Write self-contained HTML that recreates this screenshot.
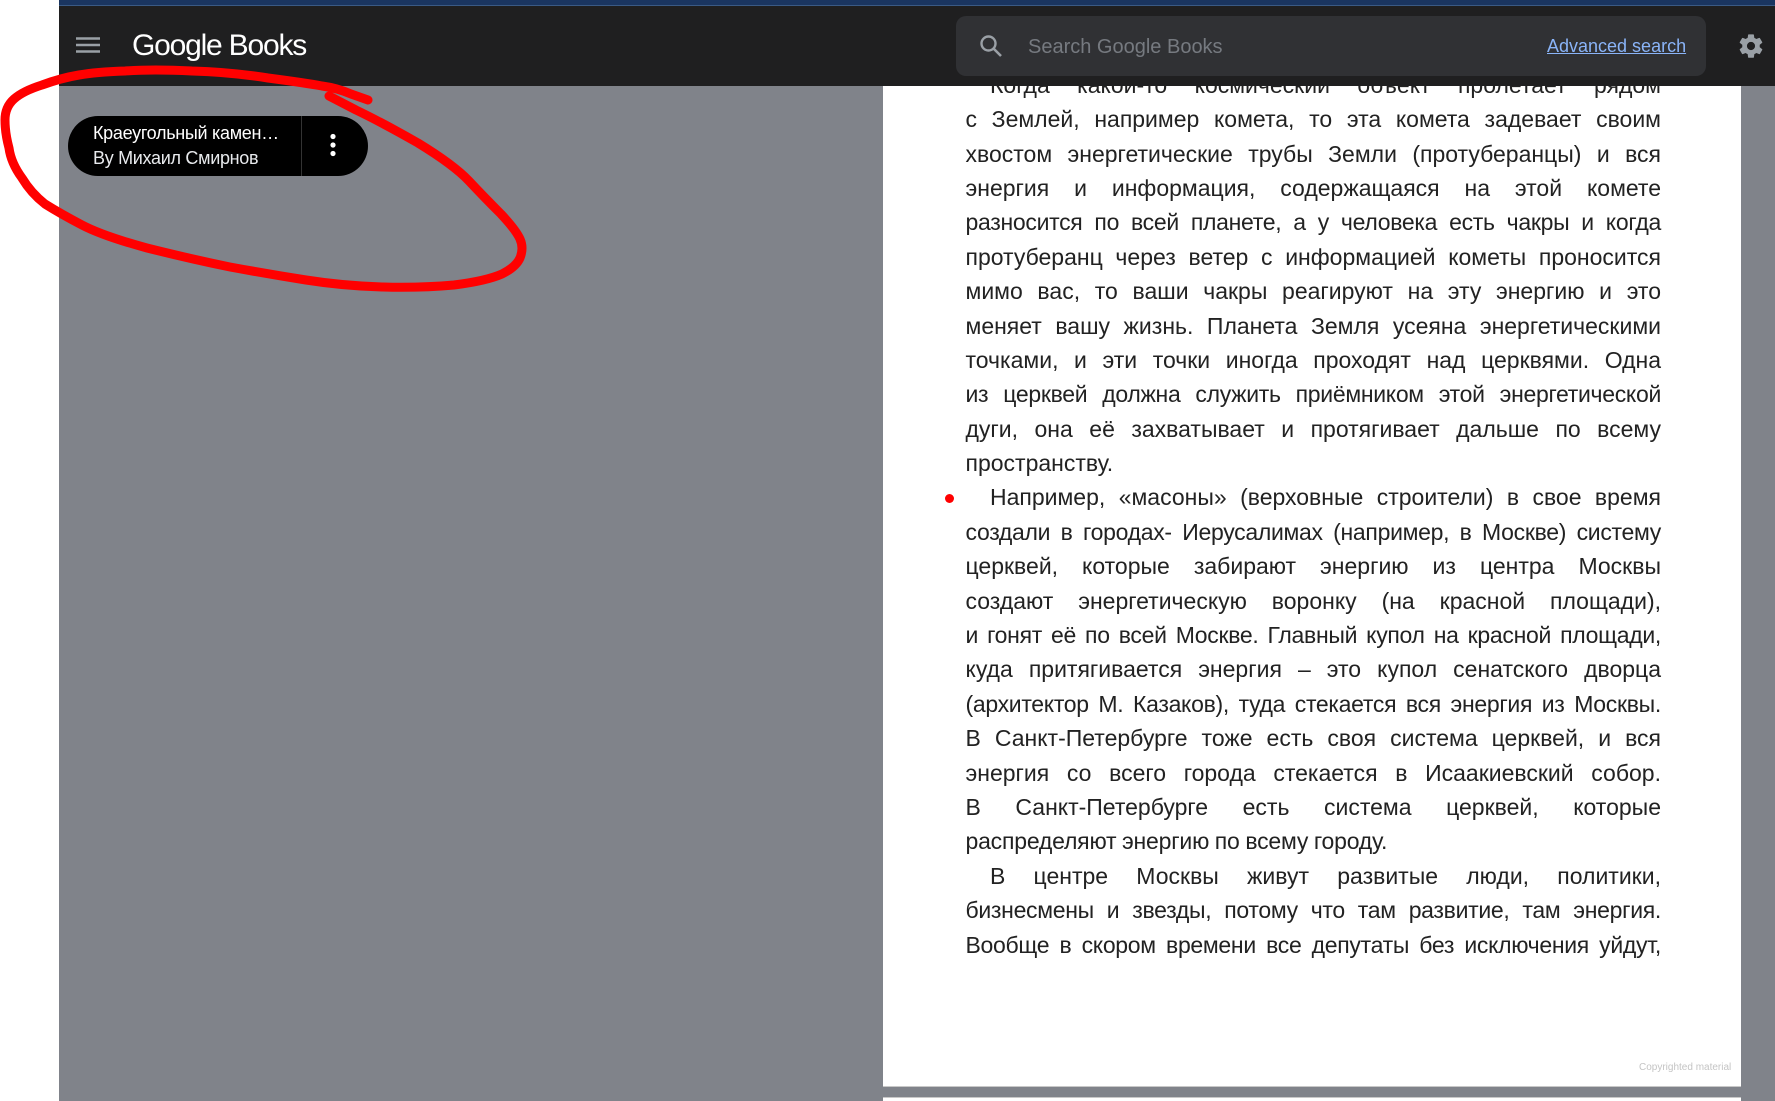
<!DOCTYPE html>
<html lang="ru">
<head>
<meta charset="utf-8">
<title>Google Books</title>
<style>
html,body{margin:0;padding:0;background:#fff;width:1775px;height:1101px;overflow:hidden}
*{box-sizing:border-box}
body{font-family:"Liberation Sans",sans-serif;position:relative}
#viewer{position:absolute;left:59px;top:0;width:1716px;height:1101px;background:#80838a}
#page{position:absolute;left:883px;top:0;width:858px;height:1087px;background:#fff;border-bottom:1px solid #c8c8c8}
#page2{position:absolute;left:883px;top:1097px;width:858px;height:4px;background:#fff;border-top:1px solid #c8c8c8}
#text{position:absolute;left:965.5px;top:67.8px;width:695.5px;color:#222;font-size:23px;line-height:34.4px}
#text div{white-space:nowrap;text-align:justify;text-align-last:justify;height:34.4px}
#text div.l{text-align-last:left}
#text div.i{padding-left:24.5px}
#text div.t{letter-spacing:-.3px;word-spacing:-1.5px}
#dot{position:absolute;left:945px;top:494px;width:9px;height:9px;border-radius:50%;background:#f00}
#copy{position:absolute;left:1639px;top:1061.5px;font-size:10px;line-height:12px;color:#c4c4c4;white-space:nowrap}
#band{position:absolute;left:59px;top:0;width:1716px;height:6px;background:#1a3560;border-bottom:1px solid #3a5a85}
#hdr{position:absolute;left:59px;top:6px;width:1716px;height:80px;background:#1f1f20}
.abs{position:absolute}
#logo{position:absolute;left:132px;top:25.5px;font-size:30px;line-height:40px;color:#fff;letter-spacing:-1.2px;white-space:nowrap}
#search{position:absolute;left:956px;top:16px;width:750px;height:60px;border-radius:10px;background:#303134}
#ph{position:absolute;left:1028px;top:35px;font-size:20px;line-height:24px;color:#767a80;white-space:nowrap}
#adv{position:absolute;left:1547px;top:35px;font-size:18px;line-height:22px;color:#8ab4f8;text-decoration:underline;white-space:nowrap}
#pill{position:absolute;left:68px;top:116px;width:300px;height:60px;border-radius:30px;background:#000}
#div{position:absolute;left:301px;top:116px;width:1px;height:60px;background:#333}
#t1{position:absolute;left:93px;top:123px;font-size:18px;line-height:20px;color:#fff;white-space:nowrap;letter-spacing:-.3px}
#t2{position:absolute;left:93px;top:148px;font-size:18px;line-height:20px;color:#e8eaed;white-space:nowrap;letter-spacing:-.3px}
</style>
</head>
<body>
<div id="viewer"></div>
<div id="page"></div>
<div id="page2"></div>
<div id="text">
<div class="i">Когда какой-то космический объект пролетает рядом</div>
<div>с Землей, например комета, то эта комета задевает своим</div>
<div>хвостом энергетические трубы Земли (протуберанцы) и вся</div>
<div>энергия и информация, содержащаяся на этой комете</div>
<div class="t">разносится по всей планете, а у человека есть чакры и когда</div>
<div>протуберанц через ветер с информацией кометы проносится</div>
<div>мимо вас, то ваши чакры реагируют на эту энергию и это</div>
<div>меняет вашу жизнь. Планета Земля усеяна энергетическими</div>
<div>точками, и эти точки иногда проходят над церквями. Одна</div>
<div class="t">из церквей должна служить приёмником этой энергетической</div>
<div>дуги, она её захватывает и протягивает дальше по всему</div>
<div class="l">пространству.</div>
<div class="i">Например, «масоны» (верховные строители) в свое время</div>
<div class="t">создали в городах- Иерусалимах (например, в Москве) систему</div>
<div>церквей, которые забирают энергию из центра Москвы</div>
<div>создают энергетическую воронку (на красной площади),</div>
<div class="t">и гонят её по всей Москве. Главный купол на красной площади,</div>
<div>куда притягивается энергия – это купол сенатского дворца</div>
<div class="t">(архитектор М. Казаков), туда стекается вся энергия из Москвы.</div>
<div>В Санкт-Петербурге тоже есть своя система церквей, и вся</div>
<div>энергия со всего города стекается в Исаакиевский собор.</div>
<div>В Санкт-Петербурге есть система церквей, которые</div>
<div class="l" style="letter-spacing:-.2px;word-spacing:-.5px">распределяют энергию по всему городу.</div>
<div class="i">В центре Москвы живут развитые люди, политики,</div>
<div class="t">бизнесмены и звезды, потому что там развитие, там энергия.</div>
<div class="t">Вообще в скором времени все депутаты без исключения уйдут,</div>
</div>
<div id="dot"></div>
<div id="copy">Copyrighted material</div>

<div id="band"></div>
<div id="hdr"></div>
<svg class="abs" style="left:76px;top:36px" width="24" height="18" viewBox="0 0 24 18"><path d="M0 2.5H24M0 9H24M0 15.5H24" stroke="#9aa0a6" stroke-width="2.4" fill="none"/></svg>
<div id="logo">Google Books</div>
<div id="search"></div>
<svg class="abs" style="left:978px;top:33px" width="26" height="26" viewBox="0 0 26 26"><circle cx="10.5" cy="10.5" r="7" stroke="#9aa0a6" stroke-width="2.4" fill="none"/><path d="M15.5 15.5L23 23" stroke="#9aa0a6" stroke-width="2.6" fill="none"/></svg>
<div id="ph">Search Google Books</div>
<div id="adv">Advanced search</div>
<svg class="abs" style="left:1737px;top:32px" width="28" height="28" viewBox="0 0 24 24"><path fill="#9aa0a6" fill-rule="evenodd" d="M19.4 13c.04-.32.1-.66.1-1s-.06-.68-.1-1l2.1-1.65c.2-.15.24-.42.12-.64l-2-3.46c-.12-.22-.39-.3-.61-.22l-2.49 1c-.52-.4-1.06-.73-1.69-.98l-.37-2.65A.5.5 0 0 0 14 2h-4a.5.5 0 0 0-.49.42l-.37 2.65c-.63.25-1.17.59-1.69.98l-2.49-1c-.22-.08-.49 0-.61.22l-2 3.46c-.13.22-.08.49.12.64L4.57 11c-.04.32-.07.66-.07 1s.03.68.07 1l-2.1 1.65c-.2.15-.25.42-.12.64l2 3.46c.12.22.39.3.61.22l2.49-1c.52.4 1.06.73 1.69.98l.37 2.65c.04.24.25.42.49.42h4c.24 0 .45-.18.49-.42l.37-2.65c.63-.25 1.17-.59 1.69-.98l2.49 1c.22.08.49 0 .61-.22l2-3.46c.12-.22.08-.49-.12-.64L19.4 13zM12 15.5a3.5 3.5 0 1 1 0-7 3.5 3.5 0 0 1 0 7z"/></svg>

<div id="pill"></div>
<div id="div"></div>
<div id="t1">Краеугольный камен…</div>
<div id="t2">By Михаил Смирнов</div>
<svg class="abs" style="left:328px;top:132px" width="10" height="26" viewBox="0 0 10 26"><circle cx="5" cy="4.5" r="2.6" fill="#fff"/><circle cx="5" cy="13" r="2.6" fill="#fff"/><circle cx="5" cy="21.5" r="2.6" fill="#fff"/></svg>

<svg class="abs" style="left:0;top:0" width="1775" height="1101" viewBox="0 0 1775 1101"><path d="M329 96 L356 110 Q383 123 418 143 Q454 165 469 181 Q484 197 501 214 Q516 230 520 239 Q524 248 520 258 Q516 267 502 274 Q486 281 454 285 Q421 288 383 287 Q344 286 306 280 Q268 274 230 267 Q191 259 147 248 Q103 236 82 225 Q61 214 45 204 Q31 193 22 178 Q11 163 9 148 Q5 133 5 120 Q5 107 14 99 Q23 91 42 85 Q61 78 79 75 Q96 72 125 71 Q153 69 192 71 Q230 72 268 78 Q306 83 322 86 Q337 88 351 94 L368 100" fill="none" stroke="#f00" stroke-width="9" stroke-linecap="round" stroke-linejoin="round"/></svg>
</body>
</html>
